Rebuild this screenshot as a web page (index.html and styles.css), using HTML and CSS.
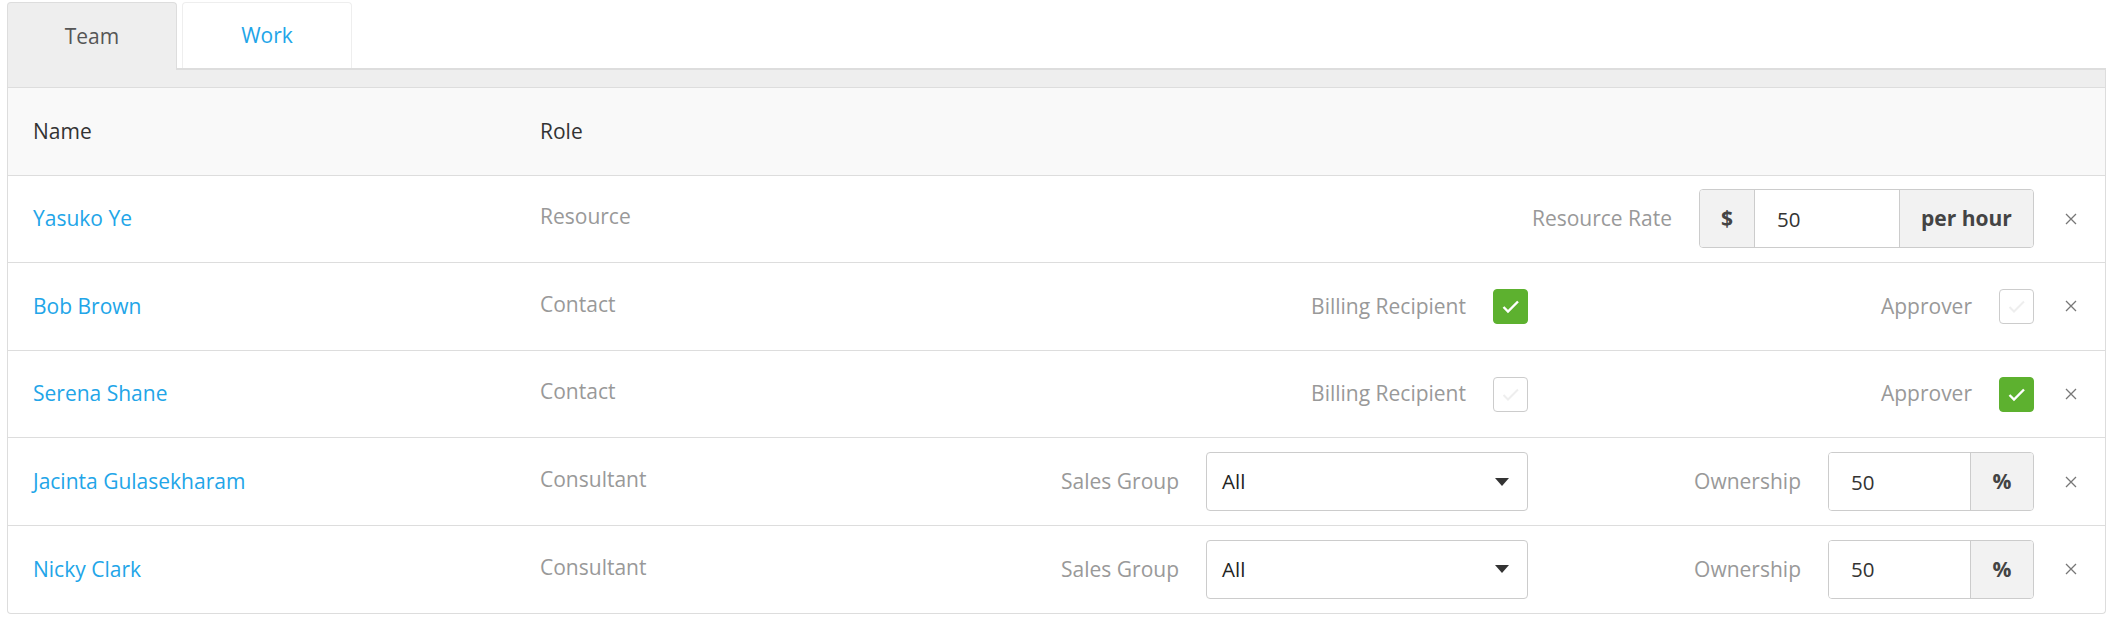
FILE: index.html
```html
<!DOCTYPE html>
<html>
<head>
<meta charset="utf-8">
<title>Team</title>
<link rel="stylesheet" href="styles.css">
</head>
<body>
<div class="page">
  <div class="tabs">
    <div class="tab tab-active">Team</div>
    <div class="tab">Work</div>
  </div>
  <div class="panel">
    <div class="band"></div>
    <div class="row row-head">
      <div class="cell-name">Name</div>
      <div class="cell-head">Role</div>
    </div>

    <div class="row">
      <a class="cell-name name-link" href="#">Yasuko Ye</a>
      <div class="cell-role">Resource</div>
      <div class="field"></div>
      <div class="field">
        <span class="label">Resource Rate</span>
        <div class="group">
          <span class="addon addon-dollar">$</span>
          <input class="input input-rate" type="text" value="50">
          <span class="addon addon-hour">per hour</span>
        </div>
      </div>
      <div class="close"><svg width="12" height="12" viewBox="0 0 12 12"><path d="M1 1L11 11M11 1L1 11" stroke="#777" stroke-width="1.3" fill="none"/></svg></div>
    </div>

    <div class="row">
      <a class="cell-name name-link" href="#">Bob Brown</a>
      <div class="cell-role">Contact</div>
      <div class="field">
        <span class="label">Billing Recipient</span>
        <span class="check check-on"><svg width="35" height="35" viewBox="0 0 35 35"><path d="M10.5 18L15 22.5L25 12.5" stroke="#fff" stroke-width="2.4" fill="none"/></svg></span>
      </div>
      <div class="field">
        <span class="label">Approver</span>
        <span class="check"><svg width="35" height="35" viewBox="0 0 35 35"><path d="M10.5 18L15 22.5L25 12.5" stroke="#eee" stroke-width="2" fill="none"/></svg></span>
      </div>
      <div class="close"><svg width="12" height="12" viewBox="0 0 12 12"><path d="M1 1L11 11M11 1L1 11" stroke="#777" stroke-width="1.3" fill="none"/></svg></div>
    </div>

    <div class="row">
      <a class="cell-name name-link" href="#">Serena Shane</a>
      <div class="cell-role">Contact</div>
      <div class="field">
        <span class="label">Billing Recipient</span>
        <span class="check"><svg width="35" height="35" viewBox="0 0 35 35"><path d="M10.5 18L15 22.5L25 12.5" stroke="#eee" stroke-width="2" fill="none"/></svg></span>
      </div>
      <div class="field">
        <span class="label">Approver</span>
        <span class="check check-on"><svg width="35" height="35" viewBox="0 0 35 35"><path d="M10.5 18L15 22.5L25 12.5" stroke="#fff" stroke-width="2.4" fill="none"/></svg></span>
      </div>
      <div class="close"><svg width="12" height="12" viewBox="0 0 12 12"><path d="M1 1L11 11M11 1L1 11" stroke="#777" stroke-width="1.3" fill="none"/></svg></div>
    </div>

    <div class="row">
      <a class="cell-name name-link" href="#">Jacinta Gulasekharam</a>
      <div class="cell-role">Consultant</div>
      <div class="field">
        <span class="label">Sales Group</span>
        <div class="select"><span>All</span><svg width="14" height="8" viewBox="0 0 14 8"><path d="M0 0H14L7 8Z" fill="#333"/></svg></div>
      </div>
      <div class="field">
        <span class="label">Ownership</span>
        <div class="group">
          <input class="input input-own" type="text" value="50">
          <span class="addon addon-pct">%</span>
        </div>
      </div>
      <div class="close"><svg width="12" height="12" viewBox="0 0 12 12"><path d="M1 1L11 11M11 1L1 11" stroke="#777" stroke-width="1.3" fill="none"/></svg></div>
    </div>

    <div class="row">
      <a class="cell-name name-link" href="#">Nicky Clark</a>
      <div class="cell-role">Consultant</div>
      <div class="field">
        <span class="label">Sales Group</span>
        <div class="select"><span>All</span><svg width="14" height="8" viewBox="0 0 14 8"><path d="M0 0H14L7 8Z" fill="#333"/></svg></div>
      </div>
      <div class="field">
        <span class="label">Ownership</span>
        <div class="group">
          <input class="input input-own" type="text" value="50">
          <span class="addon addon-pct">%</span>
        </div>
      </div>
      <div class="close"><svg width="12" height="12" viewBox="0 0 12 12"><path d="M1 1L11 11M11 1L1 11" stroke="#777" stroke-width="1.3" fill="none"/></svg></div>
    </div>
  </div>
</div>
</body>
</html>
```
FILE: styles.css
```css
* { box-sizing: border-box; }

body {
  margin: 0;
  background: #fff;
  font-family: "Open Sans", "Noto Sans", sans-serif;
  font-size: 21px;
  line-height: 1.4;
  color: #333;
}

.page {
  padding: 0 6px 0 7px;
}

.tabs {
  display: flex;
  align-items: flex-start;
  gap: 5px;
  padding-top: 2px;
  border-bottom: 2px solid #ddd;
}

.tab {
  width: 170px;
  height: 66px;
  display: flex;
  align-items: center;
  justify-content: center;
  border: 1px solid #eee;
  border-bottom: none;
  border-radius: 4px 4px 0 0;
  background: #fff;
  color: #22a5e8;
}

.tab-active {
  height: 68px;
  margin-bottom: -2px;
  background: #eee;
  border-color: #ddd;
  color: #555;
}

.panel {
  border: 1px solid #ddd;
  border-top: none;
  border-radius: 0 0 4px 4px;
}

.band {
  height: 17px;
  background: #eee;
}

.row {
  display: grid;
  grid-template-columns: 507px 490px 1fr 506px 71px;
  align-items: center;
  height: 87.6px;
  border-top: 1px solid #ddd;
  padding-left: 25px;
}

.row-head {
  background: #f9f9f9;
}

.cell-head {
  color: #333;
}

.name-link {
  color: #22a5e8;
  text-decoration: none;
}

.cell-role {
  color: #999;
  padding-bottom: 4px;
}

.field {
  display: flex;
  justify-content: flex-end;
  align-items: center;
  gap: 27px;
}

.label {
  color: #999;
}

.group {
  display: flex;
  height: 59px;
  border: 1px solid #ccc;
  border-radius: 4px;
  overflow: hidden;
}

.addon {
  display: flex;
  align-items: center;
  justify-content: center;
  background: #f2f2f2;
  font-weight: 700;
  color: #444;
}

.addon-dollar { width: 54px; }

.addon-hour {
  width: 134px;
  border-left: 1px solid #ccc;
}

.addon-pct {
  width: 63px;
  border-left: 1px solid #ccc;
}

.input {
  border: none;
  outline: none;
  margin: 0;
  padding: 0 0 0 22px;
  font-family: inherit;
  font-size: 20.5px;
  color: #333;
  background: #fff;
}

.input-rate {
  width: 145px;
  border-left: 1px solid #ccc;
}

.input-own {
  width: 141px;
}

.select {
  width: 322px;
  height: 59px;
  display: flex;
  align-items: center;
  justify-content: space-between;
  padding: 0 18px 0 15px;
  border: 1px solid #ccc;
  border-radius: 4px;
  color: #222;
  font-size: 20.5px;
}

.check {
  display: flex;
  width: 35px;
  height: 35px;
  border: 1px solid #ccc;
  border-radius: 4px;
  background: #fff;
  overflow: hidden;
}

.check svg { margin: -1px; flex: none; }

.check-on {
  background: #5db12f;
  border-color: #5db12f;
}

.close {
  justify-self: start;
  margin-left: 31px;
  display: flex;
}
```
